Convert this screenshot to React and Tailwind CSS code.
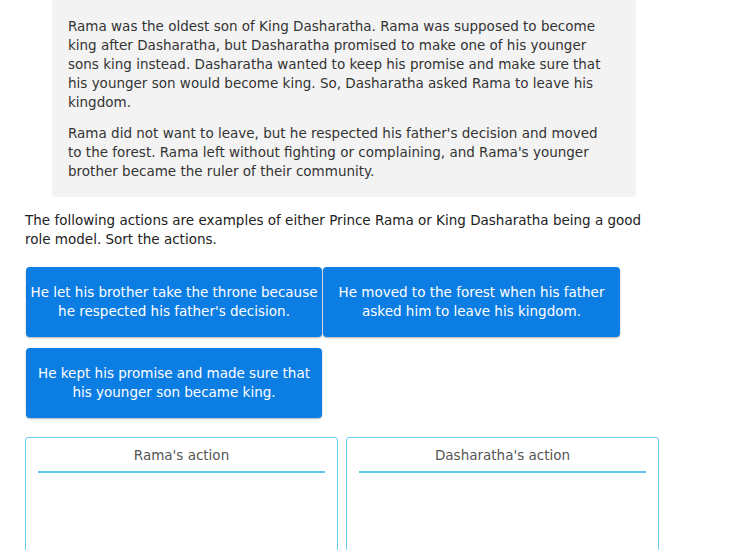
import React from 'react';

const actions = [
  "He let his brother take the throne because he respected his father's decision.",
  'He moved to the forest when his father asked him to leave his kingdom.',
  'He kept his promise and made sure that his younger son became king.',
];

const bins = ["Rama's action", "Dasharatha's action"];

export default function App() {
  return (
    <div className="min-h-[550px] bg-white pl-[25px] text-[13.5px] leading-[19px] text-[#333]" style={{ fontFamily: '"DejaVu Sans", Verdana, sans-serif' }}>
      <div className="ml-[27px] w-[584px] rounded-b-[3px] bg-[#f3f3f3] pt-[17px] pr-[31px] pb-4 pl-4">
        <p>
          Rama was the oldest son of King Dasharatha. Rama was supposed to become king after Dasharatha, but
          Dasharatha promised to make one of his younger sons king instead. Dasharatha wanted to keep his promise
          and make sure that his younger son would become king. So, Dasharatha asked Rama to leave his kingdom.
        </p>
        <p className="mt-3">
          Rama did not want to leave, but he respected his father's decision and moved to the forest. Rama left
          without fighting or complaining, and Rama's younger brother became the ruler of their community.
        </p>
      </div>

      <p className="mt-[14px] w-[620px] text-[#222]">
        The following actions are examples of either Prince Rama or King Dasharatha being a good role model. Sort
        the actions.
      </p>

      <div className="mt-[18px] ml-px flex w-[600px] flex-wrap gap-x-px gap-y-[11px]">
        {actions.map((a, i) => (
          <div
            key={i}
            className={`flex h-[70px] items-center justify-center rounded-[4px] bg-[#0b7de3] px-1 text-center text-white shadow-[0_1px_2px_rgba(0,0,0,0.3)] ${i === 1 ? 'w-[297px]' : 'w-[296px]'}`}
          >
            <span>{a}</span>
          </div>
        ))}
      </div>

      <div className="mt-[19px] flex gap-2">
        {bins.map((b) => (
          <div key={b} className="h-[200px] w-[313px] rounded-[3px] border border-[#6dcdf3] px-3 pt-2">
            <div className="text-center text-[#555]">{b}</div>
            <div className="mt-[6px] h-[2px] bg-[#5ec8f2]" />
          </div>
        ))}
      </div>
    </div>
  );
}
